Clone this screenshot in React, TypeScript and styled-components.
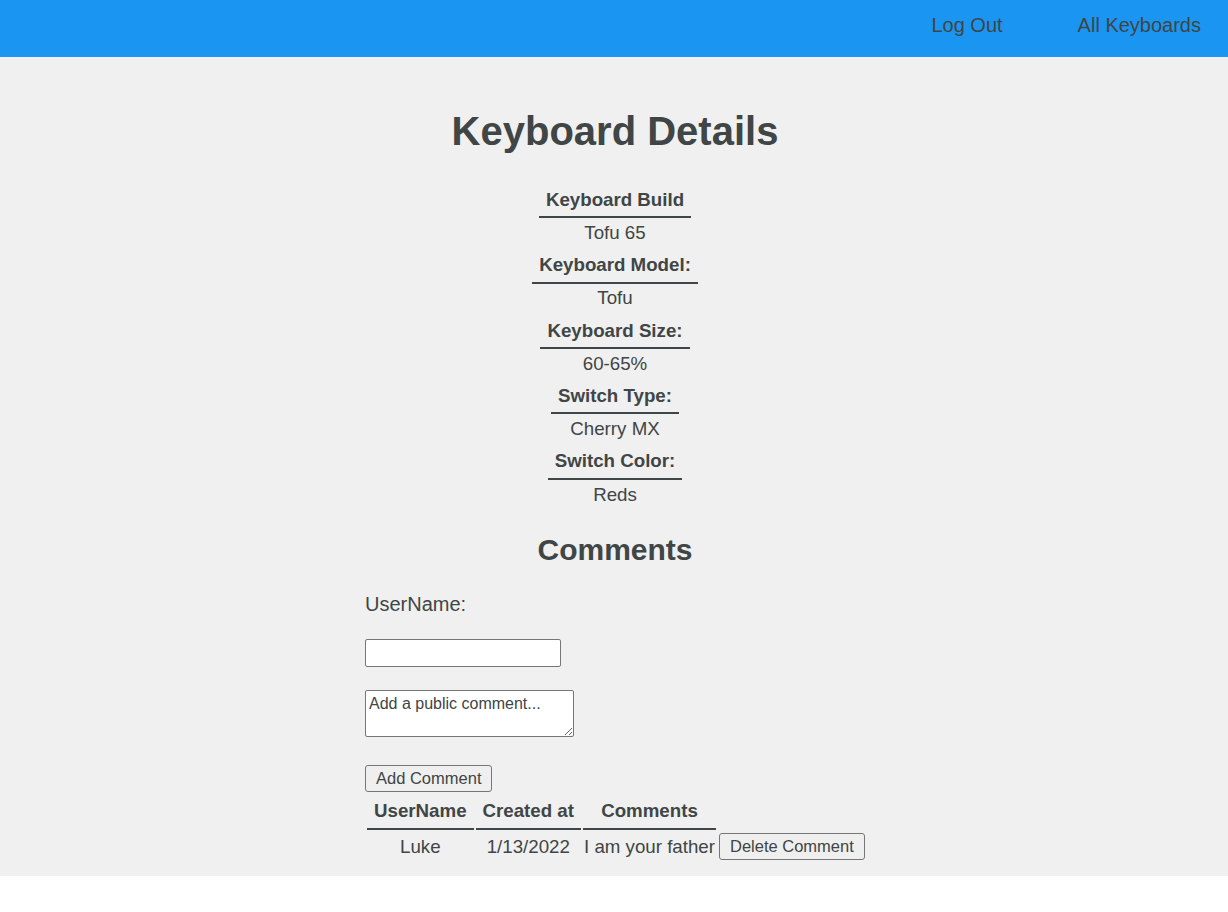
import React from "react";
import styled, { createGlobalStyle } from "styled-components";

const ink = "#404545";

const Global = createGlobalStyle`
  html, body { margin: 0; padding: 0; background: #ffffff; }
  body { font-family: "Liberation Sans", Arial, Helvetica, sans-serif; color: ${ink}; }
`;

const NavBar = styled.nav`
  height: 57px;
  box-sizing: border-box;
  background: #1a96f2;
  display: flex;
  justify-content: flex-end;
  align-items: flex-start;
  gap: 75px;
  padding: 14px 27px 0 0;
`;

const NavLink = styled.a`
  font-size: 20px;
  line-height: 23px;
  color: ${ink};
  text-decoration: none;
  cursor: pointer;
`;

const Main = styled.main`
  background: #f0f0f0;
  padding: 50.8px 0 12.4px 2px;
  display: flex;
  flex-direction: column;
  align-items: center;
`;

const Title = styled.h1`
  margin: 0 0 29px;
  font-size: 40px;
  line-height: 46px;
  font-weight: 700;
  text-align: center;
`;

const DetailList = styled.div`
  display: flex;
  flex-direction: column;
  align-items: center;
`;

const DetailLabel = styled.div`
  font-size: 18.72px;
  font-weight: 700;
  line-height: 21.5px;
  padding: 6px 7px;
  border-bottom: 2px solid ${ink};
`;

const DetailValue = styled.div`
  font-size: 18.72px;
  line-height: 21.5px;
  padding: 3.8px 0 4.6px;
`;

const SubTitle = styled.h2`
  margin: 23px 0 0;
  font-size: 30px;
  line-height: 34.5px;
  font-weight: 700;
  text-align: center;
`;

const Form = styled.form`
  width: 500px;
  display: flex;
  flex-direction: column;
  align-items: flex-start;
`;

const Label = styled.label`
  margin-top: 25.5px;
  font-size: 20px;
  line-height: 23px;
`;

const TextInput = styled.input`
  margin: 23.4px 0 0;
  box-sizing: border-box;
  width: 196px;
  height: 27.4px;
  padding: 2px 3px;
  border: 1px solid #767676;
  border-radius: 2px;
  background: #ffffff;
  font: 16px "Liberation Sans", Arial, sans-serif;
  color: ${ink};
`;

const TextArea = styled.textarea`
  margin: 23.6px 0 0;
  box-sizing: border-box;
  width: 209px;
  height: 46.4px;
  padding: 4px 3px;
  border: 1px solid #767676;
  border-radius: 2px;
  background: #ffffff;
  font: 16px "Liberation Sans", Arial, sans-serif;
  line-height: 18.4px;
  color: ${ink};
  resize: both;
  &::placeholder { color: ${ink}; opacity: 1; }
`;

const Button = styled.button<{ $top?: number }>`
  margin: ${(p) => p.$top ?? 0}px 0 0;
  box-sizing: border-box;
  height: 27.5px;
  padding: 0 10px;
  border: 1px solid #767676;
  border-radius: 3px;
  background: #efefef;
  font: 16.5px "Liberation Sans", Arial, sans-serif;
  color: ${ink};
  white-space: nowrap;
  cursor: pointer;
`;

const Table = styled.table`
  margin-top: 0;
  border-collapse: separate;
  border-spacing: 2px;
`;

const Th = styled.th`
  font-size: 18.72px;
  font-weight: 700;
  line-height: 21.5px;
  padding: 6px 7px;
  border-bottom: 2px solid ${ink};
  text-align: center;
  white-space: nowrap;
`;

const Td = styled.td`
  font-size: 18.72px;
  line-height: 21.5px;
  padding: 1px;
  text-align: center;
  vertical-align: middle;
  white-space: nowrap;
`;

const details: [string, string][] = [
  ["Keyboard Build", "Tofu 65"],
  ["Keyboard Model:", "Tofu"],
  ["Keyboard Size:", "60-65%"],
  ["Switch Type:", "Cherry MX"],
  ["Switch Color:", "Reds"],
];

export default function App() {
  return (
    <>
      <Global />
      <NavBar>
        <NavLink>Log Out</NavLink>
        <NavLink>All Keyboards</NavLink>
      </NavBar>
      <Main>
        <Title>Keyboard Details</Title>
        <DetailList>
          {details.map(([k, v]) => (
            <React.Fragment key={k}>
              <DetailLabel>{k}</DetailLabel>
              <DetailValue>{v}</DetailValue>
            </React.Fragment>
          ))}
        </DetailList>
        <SubTitle>Comments</SubTitle>
        <Form onSubmit={(e) => e.preventDefault()}>
          <Label htmlFor="username">UserName:</Label>
          <TextInput id="username" type="text" />
          <TextArea placeholder="Add a public comment..." />
          <Button $top={28.3} type="submit">Add Comment</Button>
          <Table>
            <thead>
              <tr>
                <Th>UserName</Th>
                <Th>Created at</Th>
                <Th>Comments</Th>
              </tr>
            </thead>
            <tbody>
              <tr>
                <Td>Luke</Td>
                <Td>1/13/2022</Td>
                <Td>I am your father</Td>
                <Td>
                  <Button type="button">Delete Comment</Button>
                </Td>
              </tr>
            </tbody>
          </Table>
        </Form>
      </Main>
    </>
  );
}
